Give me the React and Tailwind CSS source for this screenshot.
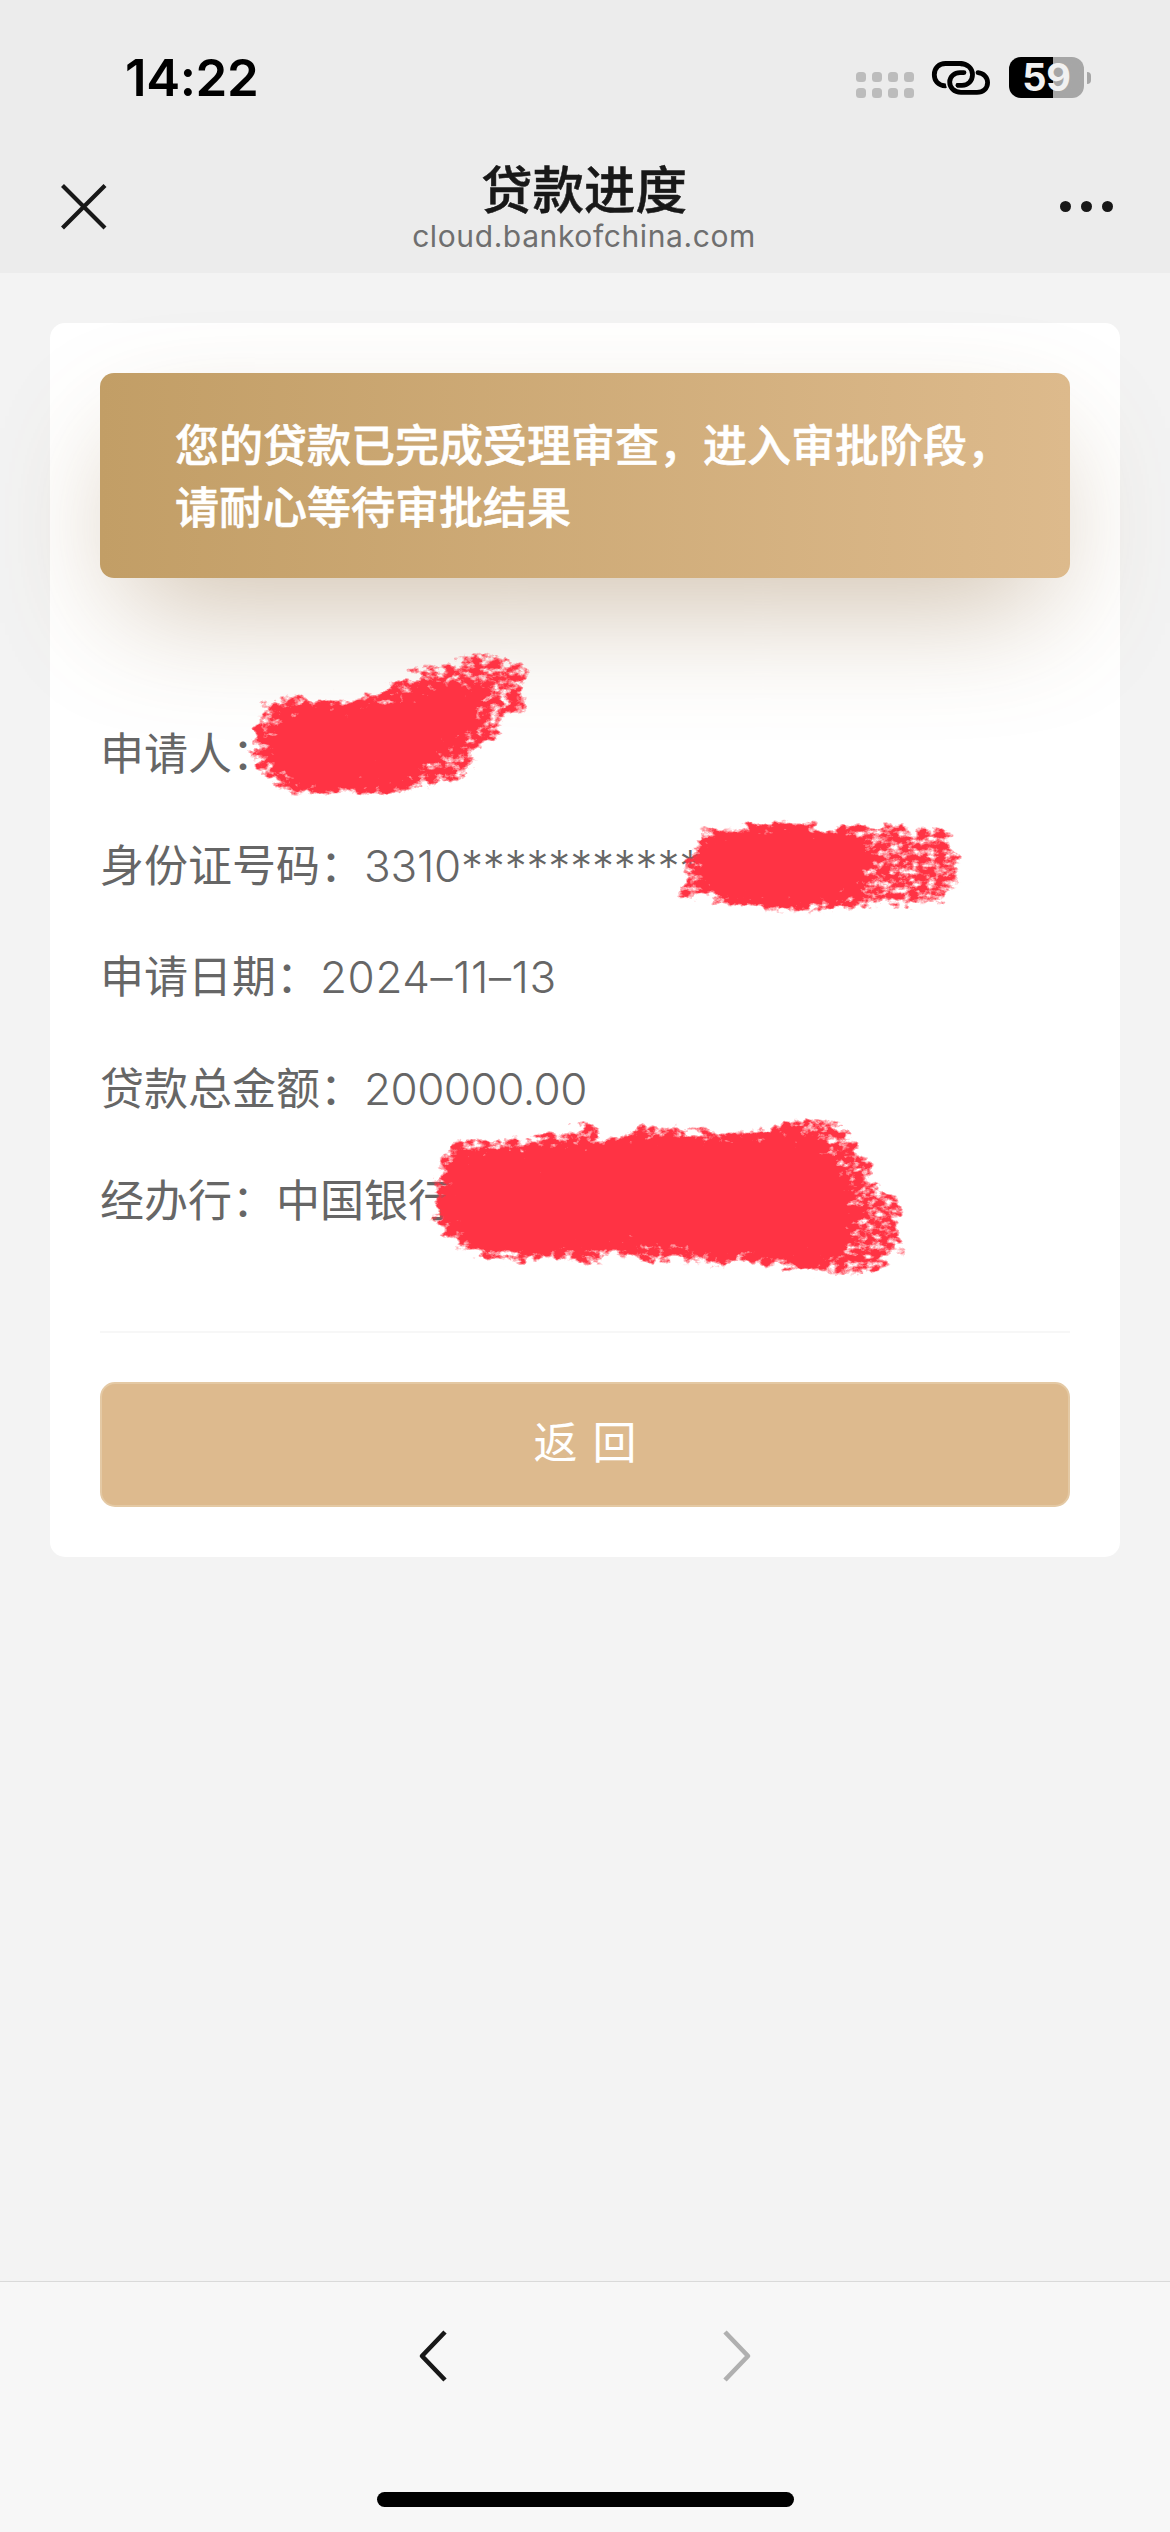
import React from 'react'

const ROWS = [
  { label: '申请人', value: '' },
  { label: '身份证号码', value: '3310************', spacing: 'tracking-[-0.2px]' },
  { label: '申请日期', value: '2024–11–13', spacing: 'tracking-[0.6px]' },
  { label: '贷款总金额', value: '200000.00', spacing: 'tracking-[-0.5px]' },
  { label: '经办行', value: '中国银行', weight: 'font-normal' },
]

// outer = dry grainy edge of the crayon, core = solid middle
const SCRIBBLES = [
  {
    outer: '260,702 287,695 310,701 347,702 380,690 413,673 450,658 487,653 527,668 530,703 503,718 500,733 473,753 476,763 463,777 430,787 403,793 363,796 330,796 300,793 277,787 260,773 248,753 257,745 250,733 260,717',
    core: '305,712 350,712 400,706 440,694 470,694 476,705 460,732 435,752 410,770 385,782 310,782 282,765 275,740 290,720',
  },
  {
    outer: '700,829 740,828 742,820 770,826 815,823 830,828 850,826 920,826 945,830 956,845 961,865 952,885 945,900 900,905 850,906 800,910 750,908 718,905 708,898 677,894 683,872 674,862 696,845',
    core: '722,836 830,836 860,850 854,888 805,898 745,896 708,880 705,862 718,850',
  },
  {
    outer: '441,1160 457,1139 500,1142 540,1135 597,1123 598,1138 628,1136 642,1118 665,1127 690,1133 740,1133 785,1122 810,1119 842,1122 855,1143 861,1155 877,1165 871,1180 888,1192 907,1209 896,1225 904,1243 901,1256 889,1258 886,1272 830,1274 780,1269 740,1261 700,1262 650,1260 560,1260 480,1258 457,1246 441,1232 433,1215 438,1200 434,1180',
    core: '460,1165 500,1157 560,1155 640,1146 740,1144 795,1140 822,1155 840,1185 846,1215 842,1240 820,1256 740,1249 690,1244 640,1236 560,1243 490,1246 460,1228 448,1200',
  },
]

function StatusBar() {
  return (
    <div className="flex h-[144px] items-start pl-[125px] pr-[79px]">
      <span className="mt-[48px] text-[51px] leading-[60px] font-semibold tracking-[-0.4px] text-black">14:22</span>
      <div className="mt-[57px] ml-auto flex h-[41px] items-start">
        <div className="mt-[15px] mr-[17px] grid grid-cols-4 gap-x-[6px] gap-y-[6px]">
          {Array.from({ length: 8 }).map((_, i) => (
            <span key={i} className="h-[10px] w-[10px] rounded-[3.5px] bg-[#bcbcbc]" />
          ))}
        </div>
        <svg width="60" height="36" viewBox="0 0 60 36" fill="none" className="mt-[3px] mr-[18px]">
          <path
            d="M14.5 25.8 C7 25.8 3.3 20.5 3.3 14.7 C3.3 8 8.2 3.5 14.5 3.5 H29 C36.5 3.5 41.5 8.5 41.5 14.5 C41.5 21 37 25.3 31 25.3 H27"
            stroke="#000" strokeWidth="4.8" strokeLinecap="round"
          />
          <path
            d="M45.5 12.4 C52.5 12.4 56.6 17.5 56.6 22.5 C56.6 28.5 52 32.4 46 32.4 H30 C23 32.4 18.7 27.5 18.7 22 C18.7 16.5 23.5 12.6 29 12.6 H33"
            stroke="#ececec" strokeWidth="8"
          />
          <path d="M31 3.5 C37.5 4.5 41.5 9 41.5 14.5 C41.5 21 37 25.3 31 25.3 H27" stroke="#ececec" strokeWidth="8" />
          <path d="M28 3.5 H29 C36.5 3.5 41.5 8.5 41.5 14.5 C41.5 21 37 25.3 31 25.3 H27" stroke="#000" strokeWidth="4.8" strokeLinecap="round" />
          <path
            d="M47 12.6 C52.5 13 56.6 17.5 56.6 22.5 C56.6 28.5 52 32.4 46 32.4 H30 C23 32.4 18.7 27.5 18.7 22 C18.7 16.5 23.5 12.6 29 12.6 H33"
            stroke="#000" strokeWidth="4.8" strokeLinecap="round"
          />
        </svg>
        <div className="flex h-[41px] w-[75px] items-center justify-center rounded-[12px] bg-linear-to-r from-black from-[59%] to-[#a6a6a6] to-[59%]">
          <span className="text-[38px] leading-[41px] font-bold tracking-[-0.3px] text-[#f1f1f1]">59</span>
        </div>
        <span className="mt-[15px] ml-[3px] h-[12px] w-[4px] rounded-r-full bg-[#a6a6a6]" />
      </div>
    </div>
  )
}

function NavBar() {
  return (
    <div className="flex h-[129px] items-start justify-between pl-[60px] pr-[57px]">
      <svg width="48" height="48" viewBox="0 0 48 48" className="mt-[39px]" stroke="#181818" strokeWidth="4.2">
        <path d="M2.5 2.5 L45 45 M45 2.5 L2.5 45" />
      </svg>
      <div className="mt-[15px] flex flex-col items-center">
        <h1 className="text-[51.5px] leading-[62px] font-medium text-[#181818] [-webkit-text-stroke:0.5px_#181818]">贷款进度</h1>
        <p className="mt-[-3px] text-[30px] leading-[36px] tracking-[0.6px] text-[#6f6f6f]">cloud.bankofchina.com</p>
      </div>
      <div className="mt-[57px] flex gap-[10px]">
        <span className="h-[11px] w-[11px] rounded-full bg-[#181818]" />
        <span className="h-[11px] w-[11px] rounded-full bg-[#181818]" />
        <span className="h-[11px] w-[11px] rounded-full bg-[#181818]" />
      </div>
    </div>
  )
}

function Scribbles() {
  return (
    <svg className="pointer-events-none absolute inset-0" width="1170" height="2532" viewBox="0 0 1170 2532">
      <defs>
        <filter id="coreSoft" filterUnits="userSpaceOnUse" x="200" y="630" width="760" height="670">
          <feGaussianBlur stdDeviation="7" />
        </filter>
        <filter id="crayon" filterUnits="userSpaceOnUse" x="200" y="630" width="770" height="670" colorInterpolationFilters="sRGB">
          <feTurbulence type="fractalNoise" baseFrequency="0.11 0.16" numOctaves="4" seed="7" result="noise" />
          <feTurbulence type="fractalNoise" baseFrequency="0.03 0.18" numOctaves="4" seed="3" result="warp" />
          <feDisplacementMap in="SourceGraphic" in2="warp" scale="26" xChannelSelector="R" yChannelSelector="G" result="rough" />
          <feGaussianBlur in="rough" stdDeviation="2.4" result="soft" />
          <feComposite in="soft" in2="noise" operator="arithmetic" k1="0" k2="3.2" k3="3" k4="-2.5" result="grain" />
          <feFlood floodColor="#ff3344" />
          <feComposite in2="grain" operator="in" result="ink" />
          <feMorphology in="rough" operator="dilate" radius="1" result="limit" />
          <feGaussianBlur in="limit" stdDeviation="1" result="limitSoft" />
          <feComponentTransfer in="limitSoft" result="limitFull">
            <feFuncA type="linear" slope="2" />
          </feComponentTransfer>
          <feComposite in="ink" in2="limitFull" operator="in" />
        </filter>
      </defs>
      <g filter="url(#crayon)">
        {SCRIBBLES.map((s, i) => (
          <g key={i}>
            <polygon points={s.outer} fill="#000" fillOpacity="0.57" />
            <polygon points={s.core} fill="#000" filter="url(#coreSoft)" stroke="#000" strokeWidth="10" />
          </g>
        ))}
      </g>
    </svg>
  )
}

export default function App() {
  return (
    <div className="relative flex h-[2532px] w-[1170px] flex-col overflow-hidden bg-[#f3f3f3] font-['Inter','Noto_Sans_CJK_SC',sans-serif]">
      <header className="bg-[#ececec]">
        <StatusBar />
        <NavBar />
      </header>

      <main className="flex-1 px-[50px] pt-[50px]">
        <section className="flex h-[1234px] flex-col rounded-[15px] bg-white px-[50px] pt-[50px]">
          <div className="flex h-[205px] shrink-0 items-center rounded-[14px] bg-linear-to-r from-[#c29e66] to-[#ddba8c] px-[75px] shadow-[0_50px_125px_-25px_rgba(140,102,56,0.42)]">
            <p className="mt-[2px] text-[44px] leading-[62px] font-medium whitespace-nowrap text-white [-webkit-text-stroke:0.6px_white]">
              您的贷款已完成受理审查，进入审批阶段，
              <br />
              请耐心等待审批结果
            </p>
          </div>

          <dl className="mt-[120px] flex flex-col">
            {ROWS.map(r => (
              <div key={r.label} className="flex h-[111.8px] items-center text-[44px] leading-[62px] whitespace-nowrap text-[#666]">
                <dt>{r.label}：</dt>
                <dd className={`${r.weight || 'font-light'} ${r.spacing || ''}`}>{r.value}</dd>
              </div>
            ))}
          </dl>

          <hr className="mt-[74px] border-t-2 border-[#f7f7f7]" />
          <button className="mt-[49px] h-[125px] rounded-[15px] border-2 border-[#e4c9a4] bg-[#ddba8e] pb-[3px] text-[44px] font-normal text-white">
            返<span className="inline-block w-[15px]" />回
          </button>
        </section>
      </main>

      <footer className="flex h-[251px] flex-col items-center border-t border-[#dadada] bg-[#f7f7f7]">
        <div className="mt-[47px] flex w-[334px] justify-between">
          <svg width="30" height="54" viewBox="0 0 30 54" fill="none" stroke="#181818" strokeWidth="4.6" strokeLinejoin="round">
            <path d="M27 3 L4 27 L27 51" />
          </svg>
          <svg width="30" height="54" viewBox="0 0 30 54" fill="none" stroke="#b0b0b0" strokeWidth="4.6" strokeLinejoin="round">
            <path d="M3 3 L26 27 L3 51" />
          </svg>
        </div>
        <div className="mt-[109px] h-[15px] w-[417px] rounded-full bg-black" />
      </footer>

      <Scribbles />
    </div>
  )
}
